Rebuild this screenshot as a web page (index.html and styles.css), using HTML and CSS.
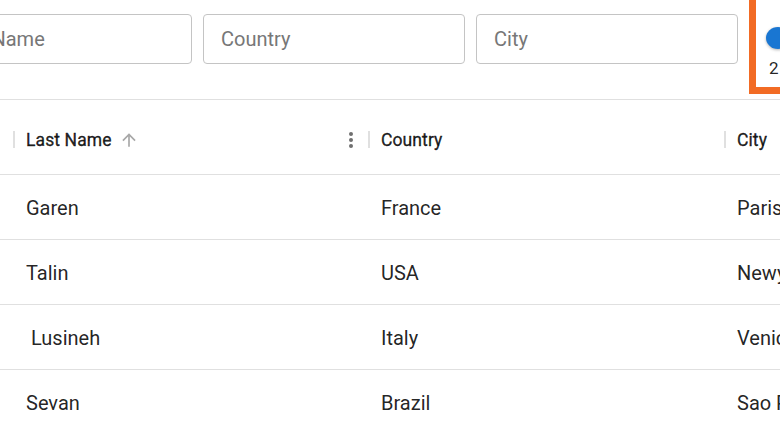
FILE: index.html
```html
<!DOCTYPE html>
<html lang="en">
<head>
<meta charset="utf-8">
<title>Data grid</title>
<link rel="stylesheet" href="styles.css">
</head>
<body>
<div class="page">
  <div class="toolbar">
    <div class="filters">
      <input class="field" type="text" placeholder="Last Name">
      <input class="field" type="text" placeholder="Country">
      <input class="field" type="text" placeholder="City">
      <div class="highlight">
        <span class="thumb"></span>
        <span class="count">2</span>
      </div>
    </div>
  </div>
  <div class="grid">
    <div class="row head">
      <div class="cell hidden-col"></div>
      <div class="cell hcell">
        <span class="sep"></span>
        <span class="title">Last Name</span>
        <svg class="sort" width="20" height="20" viewBox="0 0 24 24"><path d="M4 12l1.41 1.41L11 7.83V20h2V7.83l5.58 5.59L20 12l-8-8-8 8z" fill="currentColor"/></svg>
        <svg class="menu" width="6" height="18" viewBox="0 0 6 18"><circle cx="3" cy="3" r="2" fill="currentColor"/><circle cx="3" cy="9" r="2" fill="currentColor"/><circle cx="3" cy="15" r="2" fill="currentColor"/></svg>
      </div>
      <div class="cell hcell">
        <span class="sep"></span>
        <span class="title">Country</span>
      </div>
      <div class="cell hcell">
        <span class="sep"></span>
        <span class="title">City</span>
      </div>
    </div>
    <div class="row">
      <div class="cell hidden-col"></div>
      <div class="cell">Garen</div>
      <div class="cell">France</div>
      <div class="cell">Paris</div>
    </div>
    <div class="row">
      <div class="cell hidden-col"></div>
      <div class="cell">Talin</div>
      <div class="cell">USA</div>
      <div class="cell">Newyork</div>
    </div>
    <div class="row">
      <div class="cell hidden-col"></div>
      <div class="cell">&nbsp;Lusineh</div>
      <div class="cell">Italy</div>
      <div class="cell">Venice</div>
    </div>
    <div class="row">
      <div class="cell hidden-col"></div>
      <div class="cell">Sevan</div>
      <div class="cell">Brazil</div>
      <div class="cell">Sao Paulo</div>
    </div>
  </div>
</div>
</body>
</html>
```

FILE: styles.css
```css
html, body {
  margin: 0;
  padding: 0;
  background: #ffffff;
  overflow: hidden;
}

body {
  font-family: Roboto, "Noto Sans", Arial, sans-serif;
  color: rgba(0, 0, 0, 0.87);
}

.page {
  width: 780px;
  height: 421px;
  overflow: hidden;
}

.toolbar {
  height: 100px;
  border-bottom: 1px solid #e0e0e0;
  box-sizing: border-box;
  overflow: visible;
}

.filters {
  display: flex;
  align-items: flex-start;
  gap: 11px;
  margin-left: -70px;
  width: 1000px;
}

.field {
  margin-top: 14px;
  width: 262px;
  height: 50px;
  box-sizing: border-box;
  border: 1px solid #c4c4c4;
  border-radius: 4px;
  padding: 0 17px;
  font-family: Roboto, "Noto Sans", Arial, sans-serif;
  font-size: 20px;
  color: rgba(0, 0, 0, 0.87);
  background: #fff;
  outline: none;
}

.field::placeholder {
  color: #777777;
}

.highlight {
  margin-top: -10px;
  width: 80px;
  height: 104px;
  box-sizing: border-box;
  border: 7px solid #f26b24;
  display: flex;
  flex-direction: column;
  align-items: flex-start;
  padding: 30px 0 0 10px;
  gap: 10px;
}

.thumb {
  width: 24px;
  height: 22px;
  border-radius: 50%;
  background: #1976d2;
  box-shadow: 0 1px 3px rgba(0, 0, 0, 0.3);
}

.count {
  font-size: 17px;
  line-height: 18px;
  padding-left: 3px;
  color: rgba(0, 0, 0, 0.87);
}

.grid {
  margin-left: -87px;
}

.row {
  display: grid;
  grid-template-columns: 100px 355px 356px 300px;
  height: 65px;
  border-bottom: 1px solid #e0e0e0;
  box-sizing: border-box;
  font-size: 20px;
  align-items: center;
  padding-top: 2px;
}

.row.head {
  height: 75px;
  font-size: 17.5px;
  padding-top: 0;
}

.cell {
  padding-left: 13px;
  white-space: nowrap;
  overflow: hidden;
}

.hcell {
  display: flex;
  align-items: center;
  padding-left: 0;
  height: 100%;
  padding-top: 5px;
  box-sizing: border-box;
}

.sep {
  width: 2px;
  height: 17px;
  background: #e0e0e0;
  margin-right: 11px;
  flex-shrink: 0;
}

.title {
  font-weight: 400;
  -webkit-text-stroke: 0.35px currentColor;
  letter-spacing: 0.1px;
}

.sort {
  color: #a8a8a8;
  margin-left: 7px;
}

.menu {
  color: #707070;
  margin-left: auto;
  margin-right: 14px;
}
```
